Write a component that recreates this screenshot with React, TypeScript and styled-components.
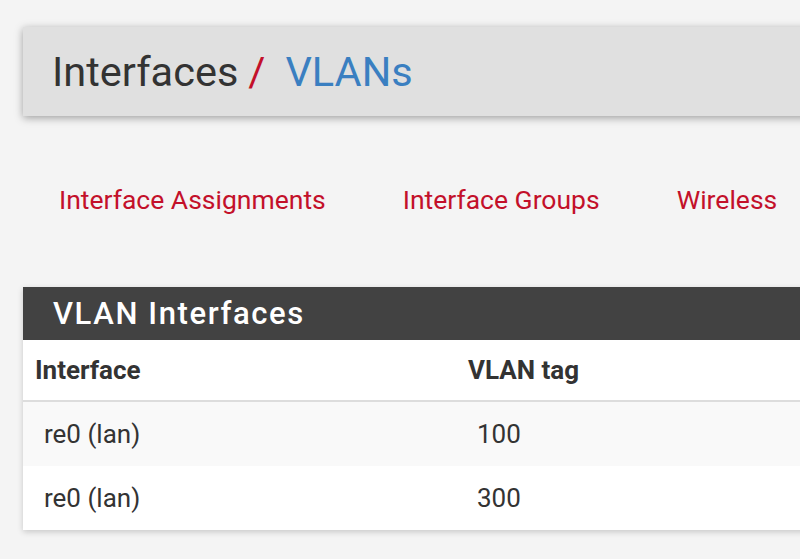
import React from "react";
import styled, { createGlobalStyle } from "styled-components";

const Global = createGlobalStyle`
  html, body { margin: 0; padding: 0; background: #f4f4f4; overflow: hidden; }
  body { font-family: Roboto, "Noto Sans", "Liberation Sans", sans-serif; color: #333; }
`;

const Page = styled.div`
  width: 800px;
  height: 559px;
  padding: 27px 0 0 23px;
  box-sizing: border-box;
  overflow: hidden;
`;

const TitleBar = styled.header`
  height: 89px;
  background: #e0e0e0;
  box-shadow: 0 2px 8px rgba(0, 0, 0, 0.35);
  display: flex;
  align-items: center;
  padding-left: 29px;
  margin-right: -20px;
`;

const Title = styled.h1`
  margin: 0;
  font-weight: 400;
  font-size: 41.5px;
  line-height: 1;
  color: #333;
  display: flex;
  align-items: baseline;
`;

const Slash = styled.span`
  color: #c3102a;
  margin: 0 20px 0 10px;
`;

const Crumb = styled.span`
  color: #3a7fc1;
`;

const Tabs = styled.nav`
  display: flex;
  gap: 77px;
  padding: 0 0 4px 36px;
  height: 171px;
  box-sizing: border-box;
  align-items: center;
`;

const Tab = styled.a`
  color: #c3102a;
  font-size: 26.5px;
  text-decoration: none;
  white-space: nowrap;
`;

const Panel = styled.section`
  background: #fff;
  box-shadow: 0 2px 6px rgba(0, 0, 0, 0.18);
  margin-right: -20px;
`;

const PanelHeading = styled.h2`
  margin: 0;
  height: 53px;
  background: #424242;
  color: #fff;
  font-size: 31px;
  font-weight: 500;
  letter-spacing: 1.6px;
  padding-left: 30px;
  display: flex;
  align-items: center;
`;

const Table = styled.table`
  width: 100%;
  border-collapse: collapse;
  table-layout: fixed;
`;

const Th = styled.th<{ $w?: number }>`
  text-align: left;
  font-weight: 700;
  font-size: 26px;
  height: 60px;
  padding: 0 0 0 12px;
  border-bottom: 2px solid #ddd;
  width: ${(p) => (p.$w ? `${p.$w}px` : "auto")};
  color: #333;
`;

const Row = styled.tr<{ $striped?: boolean }>`
  background: ${(p) => (p.$striped ? "#f9f9f9" : "#fff")};
  & + & td { border-top: 2px solid #e2e2e2; }
`;

const Td = styled.td`
  font-size: 26px;
  height: 64px;
  padding: 0 0 0 21px;
  color: #333;
`;

const rows = [
  { iface: "re0 (lan)", tag: "100" },
  { iface: "re0 (lan)", tag: "300" },
];

export default function App() {
  return (
    <>
      <Global />
      <Page>
        <TitleBar>
          <Title>
            Interfaces<Slash>/</Slash>
            <Crumb>VLANs</Crumb>
          </Title>
        </TitleBar>
        <Tabs>
          <Tab href="#">Interface Assignments</Tab>
          <Tab href="#">Interface Groups</Tab>
          <Tab href="#">Wireless</Tab>
        </Tabs>
        <Panel>
          <PanelHeading>VLAN Interfaces</PanelHeading>
          <Table>
            <thead>
              <tr>
                <Th $w={421}>Interface</Th>
                <Th>VLAN tag</Th>
              </tr>
            </thead>
            <tbody>
              {rows.map((r, i) => (
                <Row key={i} $striped={i % 2 === 0}>
                  <Td>{r.iface}</Td>
                  <Td>{r.tag}</Td>
                </Row>
              ))}
            </tbody>
          </Table>
        </Panel>
      </Page>
    </>
  );
}
